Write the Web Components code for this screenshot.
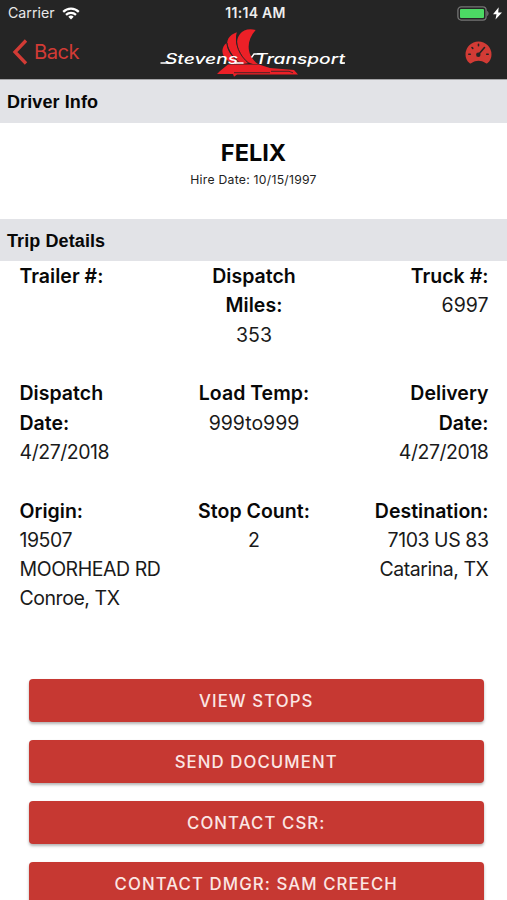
<!DOCTYPE html>
<html lang="en">
<head>
<meta charset="utf-8">
<title>Trip Details</title>
<style>
html,body{margin:0;height:900px;overflow:hidden;background:#fff}
body{font-family:Inter,"Liberation Sans",sans-serif;color:#111}
</style>
</head>
<body>
<trip-screen></trip-screen>
<script>
const define = (name, html) => customElements.define(name, class extends HTMLElement {
  constructor() {
    super();
    this.attachShadow({mode: 'open'}).innerHTML = html;
  }
});

define('status-bar', `
<style>
:host{display:grid;grid-template-columns:1fr auto 1fr;align-items:center;height:27px;padding:0 5px 0 8px;color:#e9e9e9;font-size:14.2px;line-height:26px}
.l{display:flex;align-items:center;gap:7px;letter-spacing:0}
.t{font-weight:600;font-size:14px;letter-spacing:.3px;color:#eee;padding:0 0 1px 1px}
.r{display:flex;justify-content:flex-end;align-items:center;gap:4px}
.l span{padding-bottom:1px}
svg{display:block}
.r,.l svg{position:relative;top:-.5px}
</style>
<div class="l"><span>Carrier</span>
<svg width="18" height="13" viewBox="0 0 18 13" fill="none" stroke="#fff" stroke-width="2.2"><path d="M1.2 4.9a11 11 0 0 1 15.600 0"/><path d="M4 7.900a7.200 7.200 0 0 1 10 0"/><path d="M9 12.400 6.300 9.700a4 4 0 0 1 5.400 0z" fill="#fff" stroke="none"/></svg></div>
<div class="t">11:14 AM</div>
<div class="r"><svg width="33" height="15" viewBox="0 0 33 15"><rect x="1.900" y=".9" width="28.200" height="13.200" rx="3.300" fill="#252525" stroke="#747474" stroke-width="1.300"/><rect x="4" y="3" width="24" height="9" rx="1" fill="#4cd964"/><path d="M31.200 5c1.800.6 1.800 4.400 0 5z" fill="#747474"/></svg>
<svg width="9" height="13" viewBox="0 0 9 13"><path d="M5.700.3 0 7.200h3.500L2.500 12.500 9 5.400H5.200z" fill="#fff"/></svg></div>`);

define('brand-logo', `
<style>:host{display:block;width:190px;height:51px}svg{display:block}text{font:italic 500 14px Inter,"Liberation Sans",sans-serif;fill:#fff}</style>
<svg width="190" height="51" viewBox="0 0 190 51">
<g fill="#ec2027">
<path d="M68.500 16c-5 4-5 10-2 14 2 3 5 5 9 7l8-1C74 31 69 24 68.500 16z"/>
<path d="M78.800 5.300C71 8 67.500 14 70 20c3 7 8 13 15 17l6-1C80 26 76 16 78.800 5.300z"/>
<path d="M97.700 3C91 1 85 3 82 7c-4 5-4 11 0 18 3 6 6 10 13 12h5c-11-8-13-22-2.300-34z"/>
</g>
<path d="M79.500 6c-3 11 1 22 12 31M69 16c1 8 6 15 14 21" fill="none" stroke="#252525" stroke-width=".9"/>
<path d="M70 37.500h31l11 3.500 24 2 4 4.500H79l-3 2.300-1-2.800H59l3-3z" fill="#ec2027"/>
<path d="M76 45.700h36M113 44.300h18l4 1.500" fill="none" stroke="#252525" stroke-width=".8"/>
<g>
<text x="7" y="36.500" textLength="73" lengthAdjust="spacingAndGlyphs">Stevens</text>
<text x="97" y="36.500" textLength="90" lengthAdjust="spacingAndGlyphs">Transport</text>
</g>
<path d="M2.500 36h12M77 36h8.500M93.500 30.500l2.500-3.500h8M184 36h3" fill="none" stroke="#fff" stroke-width="1.400"/>
</svg>`);

define('nav-bar', `
<style>
:host{display:grid;grid-template-columns:158px 190px 1fr;height:52px;color:#d23b35}
.back{display:flex;align-items:center;gap:6px;padding:0 0 3px 12px;font-size:20.200px;letter-spacing:-.5px}
.end{display:flex;justify-content:flex-end;padding:14px 15px 0 0}
svg{display:block}
</style>
<div class="back"><svg width="16" height="26" viewBox="0 0 16 26"><path d="M14 1.500 3 13l11 11.500" fill="none" stroke="#d23b35" stroke-width="3.300"/></svg><span>Back</span></div>
<brand-logo></brand-logo>
<div class="end"><svg width="27" height="23" viewBox="0 0 27 23"><path d="M4.700 22.200C1.800 20 .5 17 .5 13.500a13 13 0 0 1 26 0c0 3.500-1.300 6.500-4.200 8.700-.6.400-1.300.3-1.900-.1-4.300-3-9.500-3-13.800 0-.6.4-1.300.5-1.900.1z" fill="#d23b35"/><g stroke="#252525" stroke-width="1.600" stroke-linecap="round"><path d="M13.500 3.300v1.500M7 6.500l.8.900M3.800 13.300h1.500M21.700 13.300h1.500M13.500 13.500l6-7"/></g><circle cx="13.300" cy="13.800" r="2.200" fill="#252525"/></svg></div>`);

define('section-bar', `
<style>:host{display:flex;align-items:center;height:42.500px;box-sizing:border-box;padding:2.500px 7px 0;background:#e2e3e7;font:bold 18px "Liberation Sans",Arial,sans-serif;letter-spacing:.1px;color:#080808}</style><slot></slot>`);

define('driver-card', `
<style>
:host{display:block;height:96px;text-align:center;box-sizing:border-box;padding-top:16px}
.n{font-weight:700;font-size:23.500px;line-height:28px;color:#050505}
.h{font-size:12.200px;line-height:16px;margin-top:5.500px;color:#222;letter-spacing:.26px}
</style><div class="n"><slot name="name"></slot></div><div class="h"><slot></slot></div>`);

define('trip-field', `
<style>
:host{display:block;font-size:19.500px;line-height:29.300px;color:#1a1a1a;white-space:nowrap}
.k{font-weight:600;color:#080808;letter-spacing:.02px}
.v{letter-spacing:var(--value-spacing,0)}
</style><div class="k"><slot name="label"></slot></div><div class="v"><slot></slot></div>`);

define('trip-grid', `
<style>
:host{display:grid;grid-template-columns:1fr 1fr 1fr;grid-template-rows:repeat(3,117.300px);padding:1px 18.500px 0 19.500px}
::slotted(:nth-child(3n+2)){text-align:center}
::slotted(:nth-child(3n)){text-align:right}
::slotted(.date){--value-spacing:-.45px}
::slotted(.place){--value-spacing:-.45px}
</style><slot></slot>`);

define('action-button', `
<style>
:host{display:block}
button{all:unset;box-sizing:border-box;display:block;width:100%;height:43.500px;border-radius:4px;background:#c63832;color:#fbe6e4;font-weight:500;font-size:16.800px;line-height:44.500px;letter-spacing:1.080px;text-align:center;box-shadow:0 2px 3px rgba(0,0,0,.3)}
</style><button><slot></slot></button>`);

define('trip-screen', `
<style>
:host{display:flex;flex-direction:column;width:507px;height:900px;overflow:hidden;background:#fff}
header{background:#252525;height:80px;box-sizing:border-box;border-bottom:1px solid #a5a5a7;flex:none}
driver-card,section-bar,trip-grid,.actions{flex:none}
.actions{display:flex;flex-direction:column;gap:17.500px;padding:65px 23px 0 28.500px}
</style>
<header><status-bar></status-bar><nav-bar></nav-bar></header>
<section-bar>Driver Info</section-bar>
<driver-card><span slot="name">FELIX</span>Hire Date: 10/15/1997</driver-card>
<section-bar>Trip Details</section-bar>
<trip-grid>
<trip-field><span slot="label">Trailer #:</span></trip-field>
<trip-field><span slot="label">Dispatch<br>Miles:</span>353</trip-field>
<trip-field><span slot="label">Truck #:</span>6997</trip-field>
<trip-field class="date"><span slot="label">Dispatch<br>Date:</span>4/27/2018</trip-field>
<trip-field><span slot="label">Load Temp:</span>999to999</trip-field>
<trip-field class="date"><span slot="label">Delivery<br>Date:</span>4/27/2018</trip-field>
<trip-field class="place"><span slot="label">Origin:</span>19507<br>MOORHEAD RD<br>Conroe, TX</trip-field>
<trip-field><span slot="label">Stop Count:</span>2</trip-field>
<trip-field class="place"><span slot="label">Destination:</span>7103 US 83<br>Catarina, TX</trip-field>
</trip-grid>
<div class="actions">
<action-button>VIEW STOPS</action-button>
<action-button>SEND DOCUMENT</action-button>
<action-button>CONTACT CSR:</action-button>
<action-button>CONTACT DMGR: SAM CREECH</action-button>
</div>`);
</script>
</body>
</html>
